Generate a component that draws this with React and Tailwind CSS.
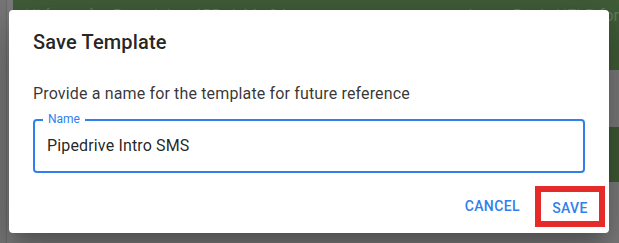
import React from "react";

export default function App() {
  const roboto = { fontFamily: "Roboto, 'Noto Sans', Arial, sans-serif" };
  return (
    <div
      className="relative w-[619px] h-[243px] overflow-hidden flex bg-[#7b7b7b]"
      style={roboto}
    >
      {/* background page (dimmed by backdrop) */}
      <div className="w-[20px] h-full bg-[#777777] border-r border-[#6b6b6b]" />
      <div className="w-[17px] h-full bg-[#7c7c7c]" />
      <div className="flex-1 flex flex-col">
        <div className="h-[70px] bg-[#405d38] pt-[4px] pl-[12px] text-[16px] leading-[24px] text-white/20 whitespace-nowrap flex">
          <span className="w-[88px]">Hi {"{name}"},</span>
          <span className="w-[130px]">Remaining 455 ch</span>
          <span className="w-[170px]">My &amp; latest st</span>
          <span className="w-[100px]">news ads</span>
          <span>Reply HELP for</span>
        </div>
        <div className="h-[57px] bg-[#7a7a7a]" />
        <div className="h-[55px] bg-[#3f5a36]" />
        <div className="flex-1 bg-[#7b7b7b]" />
      </div>

      {/* dialog */}
      <div className="absolute left-[9px] top-[10px] w-[600px] bg-white rounded-[4px] shadow-[0px_11px_15px_-7px_rgba(0,0,0,0.2),0px_24px_38px_3px_rgba(0,0,0,0.14),0px_9px_46px_8px_rgba(0,0,0,0.12)] flex flex-col">
        <div className="pt-[16px] px-[24px] text-[20px] leading-[32px] font-medium tracking-[0.15px] text-[rgba(0,0,0,0.87)]">
          Save Template
        </div>
        <div className="px-[24px] flex flex-col">
          <p className="mt-[24px] text-[16px] leading-[24px] tracking-[0.15px] text-[rgba(0,0,0,0.8)]">
            Provide a name for the template for future reference
          </p>
          <div className="relative mt-[13px] h-[54px] border-2 border-[#2f80ed] rounded-[4px] flex items-center pl-[12px]">
            <span className="absolute left-[8px] -top-[8px] px-[5px] bg-white text-[12px] leading-[12px] text-[#2f80ed]">
              Name
            </span>
            <span className="text-[16px] leading-[24px] text-[rgba(0,0,0,0.87)] tracking-[0.15px]">
              Pipedrive Intro SMS
            </span>
          </div>
        </div>
        <div className="mt-[13px] mb-[6px] pr-[4px] flex justify-end items-center">
          <span className="text-[14px] font-medium uppercase tracking-[0.4px] text-[#2f80ed] mr-[15px]">
            Cancel
          </span>
          <div className="w-[70px] h-[41px] border-[6px] border-[#e62a2a] flex items-center justify-center">
            <span className="text-[14px] font-medium uppercase tracking-[0.4px] text-[#2f80ed] mt-[3px]">
              Save
            </span>
          </div>
        </div>
      </div>
    </div>
  );
}
